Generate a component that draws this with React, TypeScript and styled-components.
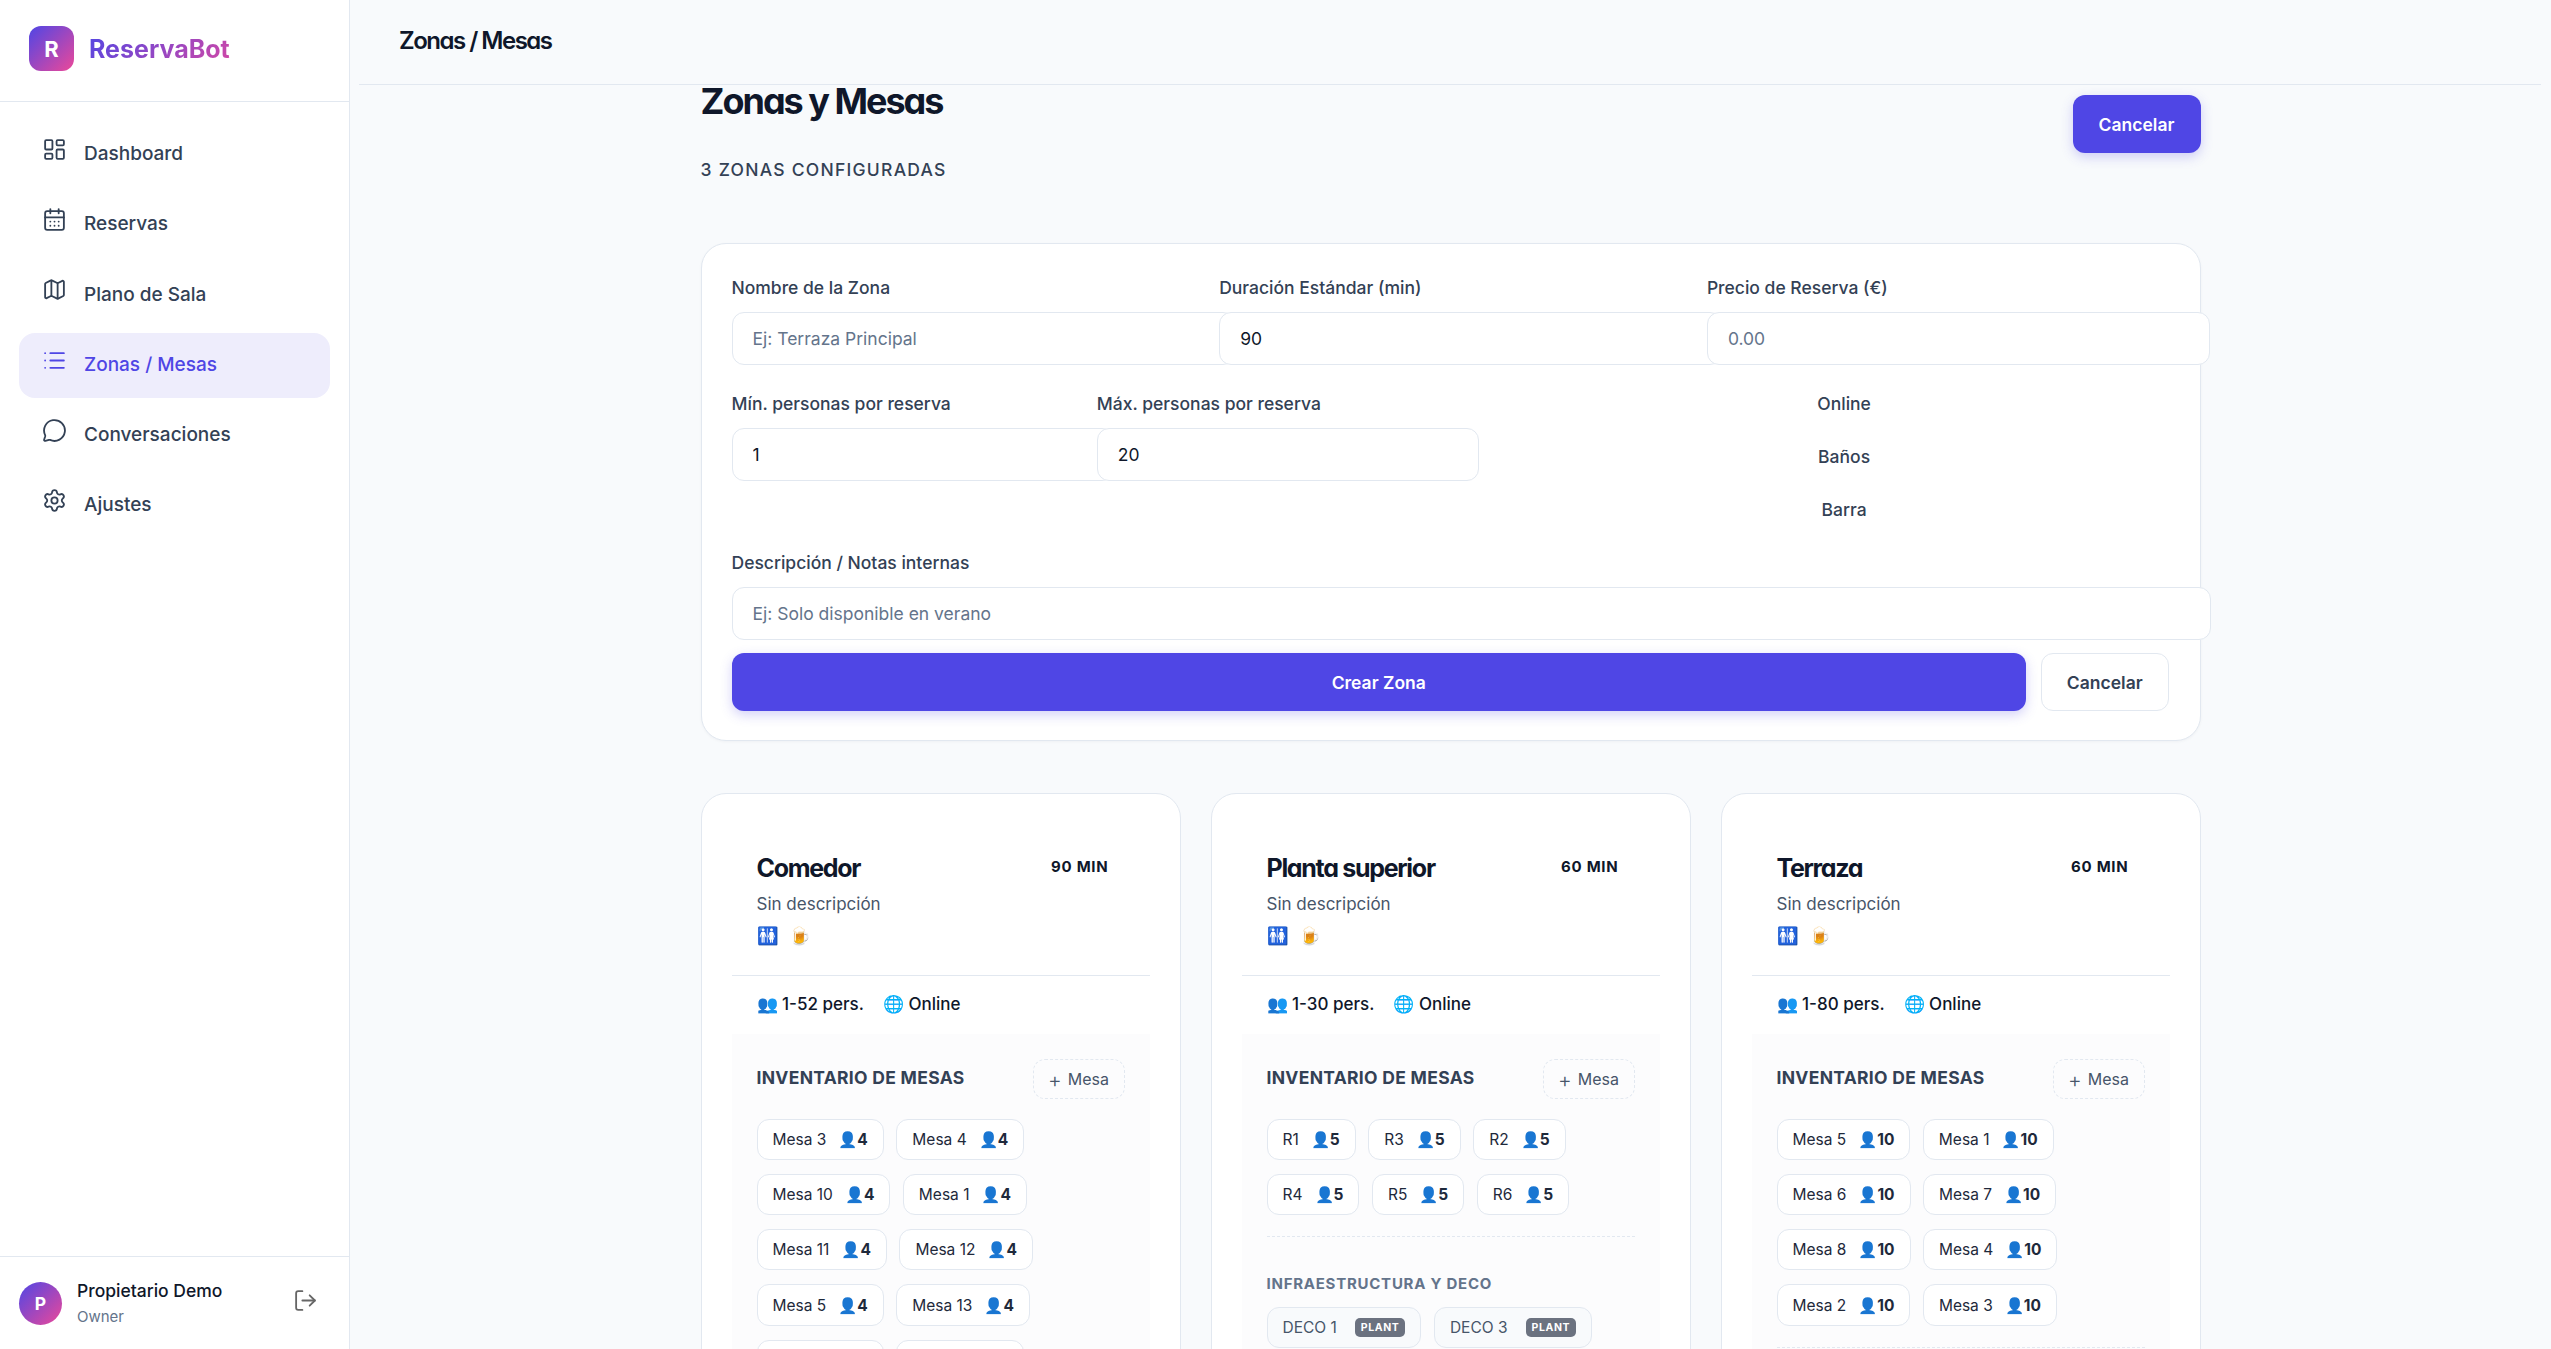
import React from 'react';
import styled, { createGlobalStyle } from 'styled-components';
import { CalendarDays, LayoutDashboard, List, LogOut, Map, MessageCircle, Settings } from 'lucide-react';

const GlobalStyle = createGlobalStyle`
	* { box-sizing: border-box; }
	html, body { margin: 0; padding: 0; height: 100%; }
	body {
		background: #f8fafc;
		color: #0f172a;
		font-family: Inter, "Noto Sans", sans-serif;
		overflow: hidden;
	}
`;

const headingFont = `font-family: Inter, sans-serif; font-feature-settings: "cv11" 1, "ss03" 1;`;

const Layout = styled.div`
	display: flex;
	height: 100vh;
	overflow: hidden;
`;

const Sidebar = styled.aside`
	width: 350px;
	flex: none;
	display: flex;
	flex-direction: column;
	background: #fff;
	border-right: 1.5px solid #e2e8f0;
`;

const Brand = styled.div`
	height: 102px;
	padding: 26px 29px 0;
	display: flex;
	gap: 15px;
	border-bottom: 1.5px solid #e2e8f0;
`;

const BrandMark = styled.div`
	width: 45px;
	height: 45px;
	border-radius: 12px;
	background: linear-gradient(135deg, #4f46e5, #ec4899);
	color: #fff;
	font-weight: 700;
	font-size: 22px;
	display: flex;
	align-items: center;
	justify-content: center;
`;

const BrandName = styled.div`
	font-size: 25px;
	font-weight: 700;
	line-height: 46px;
	background: linear-gradient(135deg, #4f46e5, #ec4899);
	-webkit-background-clip: text;
	background-clip: text;
	color: transparent;
`;

const Nav = styled.nav`
	flex: 1;
	padding: 20px 19px 0;
	display: flex;
	flex-direction: column;
	gap: 5.2px;
`;

const NavItem = styled.div<{ $active?: boolean }>`
	height: 65px;
	padding: 0 23px;
	display: flex;
	align-items: center;
	gap: 17px;
	border-radius: 16px;
	font-size: 19px;
	font-weight: 500;
	color: ${p => (p.$active ? '#4f46e5' : '#334155')};
	background: ${p => (p.$active ? '#eeedfc' : 'transparent')};

	svg {
		flex: none;
		margin-top: -10px;
	}
	span {
		margin-top: -1.5px;
	}
`;

const UserBox = styled.div`
	height: 93px;
	padding: 0 31px 0 19px;
	display: flex;
	align-items: center;
	gap: 15px;
	border-top: 1.5px solid #e2e8f0;

	svg {
		margin-top: -5px;
	}
`;

const Avatar = styled.div`
	width: 43px;
	height: 43px;
	border-radius: 50%;
	background: linear-gradient(135deg, #4f46e5, #ec4899);
	color: #fff;
	font-weight: 700;
	font-size: 17.5px;
	display: flex;
	align-items: center;
	justify-content: center;
`;

const UserInfo = styled.div`
	flex: 1;
	padding-top: 2px;
`;

const UserName = styled.div`
	font-size: 17.5px;
	font-weight: 500;
	line-height: 24px;
	color: #0f172a;
`;

const UserRole = styled.div`
	font-size: 15px;
	line-height: 24px;
	margin-top: 2px;
	color: #64748b;
`;

const Main = styled.main`
	flex: 1;
	min-width: 0;
	height: 100%;
	overflow: hidden;
`;

const Topbar = styled.header`
	height: 85px;
	margin: 0 10px 0 9px;
	padding: 0 40px;
	display: flex;
	align-items: center;
	border-bottom: 1.5px solid #e2e8f0;
`;

const TopTitle = styled.h2`
	${headingFont}
	margin: -3px 0 0;
	font-size: 24px;
	font-weight: 600;
	letter-spacing: -1.5px;
	color: #0f172a;
`;

const Content = styled.div`
	width: 1500px;
	margin: 0 auto;
`;

const PageHead = styled.div`
	height: 158px;
	display: flex;
	justify-content: space-between;
	align-items: flex-start;
`;

const PageTitle = styled.h1`
	${headingFont}
	margin: 0;
	font-size: 36px;
	line-height: 33px;
	font-weight: 700;
	letter-spacing: -2px;
	color: #0f172a;
`;

const PageSub = styled.p`
	margin: 40px 0 0;
	font-size: 17.5px;
	font-weight: 500;
	line-height: 24px;
	letter-spacing: 1.25px;
	color: #334155;
`;

const PrimaryButton = styled.button<{ $grow?: boolean }>`
	height: 58px;
	padding: 0 26px;
	border: none;
	border-radius: 12px;
	background: #4f46e5;
	color: #fff;
	font-family: inherit;
	font-size: 17.5px;
	font-weight: 600;
	box-shadow: 0 4px 12px rgba(79, 70, 229, 0.25);
	${p => p.$grow && 'flex: 1;'}
`;

const TopButton = styled(PrimaryButton)`
	width: 128px;
	padding: 0;
	margin: 10px 0 0;
`;

const GhostButton = styled.button`
	width: 127.5px;
	height: 58px;
	border: 1.5px solid #e2e8f0;
	border-radius: 12px;
	background: #fff;
	color: #334155;
	font-family: inherit;
	font-size: 17.5px;
	font-weight: 600;
`;

const FormCard = styled.section`
	height: 498px;
	padding: 29px 30px 0;
	background: #fff;
	border: 1.5px solid #e2e8f0;
	border-radius: 25px;
	box-shadow: 0 1px 3px rgba(15, 23, 42, 0.04);
`;

const FormRow = styled.div<{ $columns: string; $height?: number }>`
	display: grid;
	grid-template-columns: ${p => p.$columns};
	${p => p.$height && `height: ${p.$height}px;`}
`;

const Field = styled.div`
	min-width: 0;
`;

const Label = styled.label`
	display: block;
	font-size: 17.5px;
	font-weight: 500;
	line-height: 30px;
	margin-bottom: 9px;
	color: #334155;
`;

const Input = styled.input<{ $width: string }>`
	position: relative;
	display: block;
	width: ${p => p.$width};
	height: 52.5px;
	padding: 0 20px;
	background: #fff;
	border: 1.5px solid #e2e8f0;
	border-radius: 12px;
	outline: none;
	font-family: inherit;
	font-size: 17.5px;
	color: #0f172a;

	&::placeholder {
		color: #64748b;
		opacity: 1;
	}
`;

const ToggleList = styled.div`
	display: flex;
	flex-direction: column;
	text-align: center;
	font-size: 17.5px;
	font-weight: 500;
	line-height: 30px;
	gap: 23px;
	color: #334155;
`;

const FormActions = styled.div`
	display: flex;
	gap: 15px;
	margin: 13.5px 0 0;
	padding-right: 1px;
`;

const ZoneGrid = styled.div`
	display: grid;
	grid-template-columns: repeat(3, 1fr);
	gap: 30px;
	margin-top: 52px;
`;

const ZoneCard = styled.article`
	padding: 30px;
	background: #fff;
	border: 1.5px solid #e2e8f0;
	border-radius: 25px;
`;

const ZoneHead = styled.div`
	height: 152px;
	padding: 29px 25px 0;
	border-bottom: 1.5px solid #e2e8f0;
`;

const ZoneTitleRow = styled.div`
	display: flex;
	justify-content: space-between;
	padding-right: 16px;
`;

const ZoneName = styled.h3`
	${headingFont}
	margin: 0;
	font-size: 25px;
	line-height: 30px;
	font-weight: 700;
	letter-spacing: -1.3px;
	color: #0f172a;
`;

const Duration = styled.span`
	font-size: 15px;
	line-height: 27px;
	font-weight: 700;
	letter-spacing: 0.75px;
	color: #0f172a;
`;

const ZoneDesc = styled.p`
	margin: 6px 0 0;
	font-size: 17px;
	line-height: 30px;
	color: #475569;
`;

const Amenities = styled.div`
	display: flex;
	gap: 10px;
	margin-top: 3px;
	font-size: 17.5px;
	line-height: 28px;
`;

const StatsRow = styled.div`
	height: 55px;
	margin-bottom: 3px;
	padding: 0 25px;
	display: flex;
	align-items: center;
	gap: 19px;
	font-size: 17px;
	font-weight: 500;
	color: #0f172a;
`;

const Inventory = styled.div`
	padding: 25px;
	background: #fcfcfd;
`;

const InventoryHead = styled.div`
	display: flex;
	justify-content: space-between;
	align-items: center;
	margin-bottom: 19.5px;
`;

const InventoryTitle = styled.h4`
	margin: -4px 0 0;
	font-size: 17.5px;
	font-weight: 700;
	letter-spacing: 0.3px;
	color: #334155;
`;

const AddButton = styled.button`
	width: 92px;
	height: 40px;
	padding: 0;
	display: flex;
	align-items: center;
	justify-content: center;
	gap: 6px;
	background: transparent;
	border: 1.5px dashed #e2e8f0;
	border-radius: 12px;
	font-family: inherit;
	font-size: 16px;
	color: #475569;
`;

const PlusSign = styled.span`
	font-size: 21px;
	font-weight: 300;
	line-height: 1;
`;

const ChipWrap = styled.div`
	display: flex;
	flex-wrap: wrap;
	gap: 14px 12.5px;
`;

const TableChip = styled.div`
	height: 41.3px;
	padding: 0 15px;
	display: flex;
	align-items: center;
	gap: 12px;
	background: #fff;
	border: 1.5px solid #e2e8f0;
	border-radius: 12px;
	font-size: 15.5px;
	color: #1e293b;
`;

const Seats = styled.span`
	font-weight: 700;
`;

const Separator = styled.div`
	margin: 21px 0 0;
	border-top: 1.5px dashed #e2e8f0;
`;

const DecoTitle = styled.h5`
	margin: 35.5px 0 12.5px;
	font-size: 15px;
	line-height: 22px;
	font-weight: 700;
	letter-spacing: 0.75px;
	color: #64748b;
`;

const DecoChip = styled(TableChip)`
	gap: 18px;
	background: #f8fafc;
	color: #475569;
`;

const DecoBadge = styled.span`
	padding: 0 6px;
	height: 19px;
	border-radius: 5px;
	background: #6b7280;
	color: #fff;
	font-size: 10.5px;
	line-height: 19px;
	font-weight: 700;
	letter-spacing: 0.6px;
`;

const navLinks = [
	{ label: 'Dashboard', icon: LayoutDashboard },
	{ label: 'Reservas', icon: CalendarDays },
	{ label: 'Plano de Sala', icon: Map },
	{ label: 'Zonas / Mesas', icon: List, active: true },
	{ label: 'Conversaciones', icon: MessageCircle },
	{ label: 'Ajustes', icon: Settings },
];

const zones = [
	{
		name: 'Comedor',
		minutes: 90,
		people: '1-52',
		tables: ['Mesa 3', 'Mesa 4', 'Mesa 10', 'Mesa 1', 'Mesa 11', 'Mesa 12', 'Mesa 5', 'Mesa 13', 'Mesa 3', 'Mesa 4'],
		seats: 4,
		deco: [] as string[],
	},
	{
		name: 'Planta superior',
		minutes: 60,
		people: '1-30',
		tables: ['R1', 'R3', 'R2', 'R4', 'R5', 'R6'],
		seats: 5,
		deco: ['DECO 1', 'DECO 3'],
	},
	{
		name: 'Terraza',
		minutes: 60,
		people: '1-80',
		tables: ['Mesa 5', 'Mesa 1', 'Mesa 6', 'Mesa 7', 'Mesa 8', 'Mesa 4', 'Mesa 2', 'Mesa 3'],
		seats: 10,
		deco: ['DECO 1'],
	},
];

const App = () => {
	return (
		<Layout>
			<GlobalStyle />
			<Sidebar>
				<Brand>
					<BrandMark>R</BrandMark>
					<BrandName>ReservaBot</BrandName>
				</Brand>
				<Nav>
					{navLinks.map(link => (
						<NavItem key={link.label} $active={link.active}>
							<link.icon size={25} strokeWidth={1.75} />
							<span>{link.label}</span>
						</NavItem>
					))}
				</Nav>
				<UserBox>
					<Avatar>P</Avatar>
					<UserInfo>
						<UserName>Propietario Demo</UserName>
						<UserRole>Owner</UserRole>
					</UserInfo>
					<LogOut size={25} strokeWidth={1.75} color="#666" />
				</UserBox>
			</Sidebar>
			<Main>
				<Topbar>
					<TopTitle>Zonas / Mesas</TopTitle>
				</Topbar>
				<Content>
					<PageHead>
						<div>
							<PageTitle>Zonas y Mesas</PageTitle>
							<PageSub>3 ZONAS CONFIGURADAS</PageSub>
						</div>
						<TopButton>Cancelar</TopButton>
					</PageHead>
					<FormCard>
						<FormRow $columns="487.7px 487.7px 503px" $height={116}>
							<Field>
								<Label>Nombre de la Zona</Label>
								<Input $width="503px" placeholder="Ej: Terraza Principal" readOnly />
							</Field>
							<Field>
								<Label>Duración Estándar (min)</Label>
								<Input $width="503px" value="90" readOnly />
							</Field>
							<Field>
								<Label>Precio de Reserva (€)</Label>
								<Input $width="503px" placeholder="0.00" readOnly />
							</Field>
						</FormRow>
						<FormRow $columns="365.3px 382.3px 730px" $height={159}>
							<Field>
								<Label>Mín. personas por reserva</Label>
								<Input $width="382.3px" value="1" readOnly />
							</Field>
							<Field>
								<Label>Máx. personas por reserva</Label>
								<Input $width="382.3px" value="20" readOnly />
							</Field>
							<ToggleList>
								<span>Online</span>
								<span>Baños</span>
								<span>Barra</span>
							</ToggleList>
						</FormRow>
						<Field>
							<Label>Descripción / Notas internas</Label>
							<Input $width="1479.6px" placeholder="Ej: Solo disponible en verano" readOnly />
						</Field>
						<FormActions>
							<PrimaryButton $grow>Crear Zona</PrimaryButton>
							<GhostButton>Cancelar</GhostButton>
						</FormActions>
					</FormCard>
					<ZoneGrid>
						{zones.map(zone => (
							<ZoneCard key={zone.name}>
								<ZoneHead>
									<ZoneTitleRow>
										<ZoneName>{zone.name}</ZoneName>
										<Duration>{zone.minutes} MIN</Duration>
									</ZoneTitleRow>
									<ZoneDesc>Sin descripción</ZoneDesc>
									<Amenities>
										<span>🚻</span>
										<span>🍺</span>
									</Amenities>
								</ZoneHead>
								<StatsRow>
									<span>👥 {zone.people} pers.</span>
									<span>🌐 Online</span>
								</StatsRow>
								<Inventory>
									<InventoryHead>
										<InventoryTitle>INVENTARIO DE MESAS</InventoryTitle>
										<AddButton>
											<PlusSign>+</PlusSign>
											Mesa
										</AddButton>
									</InventoryHead>
									<ChipWrap>
										{zone.tables.map((table, idx) => (
											<TableChip key={idx}>
												{table}
												<Seats>👤{zone.seats}</Seats>
											</TableChip>
										))}
									</ChipWrap>
									<Separator />
									<DecoTitle>INFRAESTRUCTURA Y DECO</DecoTitle>
									<ChipWrap>
										{zone.deco.map(item => (
											<DecoChip key={item}>
												{item}
												<DecoBadge>PLANT</DecoBadge>
											</DecoChip>
										))}
									</ChipWrap>
								</Inventory>
							</ZoneCard>
						))}
					</ZoneGrid>
				</Content>
			</Main>
		</Layout>
	);
};

export default App;
